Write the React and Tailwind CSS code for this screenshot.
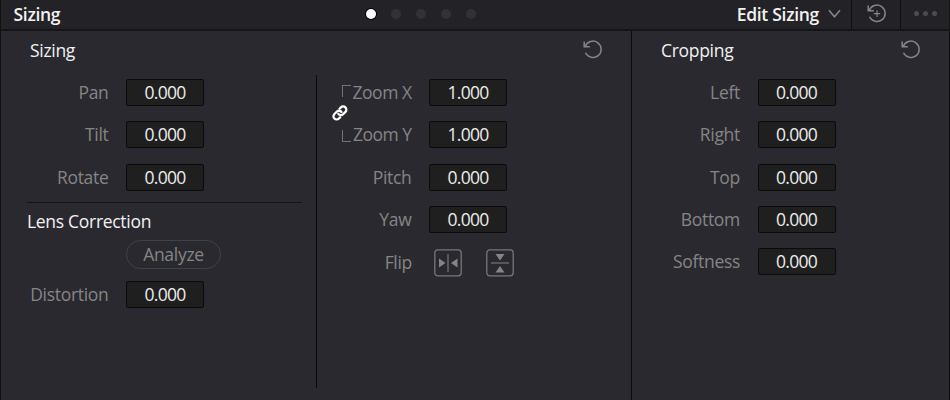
import React from "react";

function ResetIcon({ plus = false }) {
  return (
    <svg width="20" height="20" viewBox="0 0 20 20" fill="none" stroke="#858585" strokeWidth="1.5" className="block">
      <path d="M2.2 6.6 A8.2 8.2 0 1 1 2.5 12.8" />
      <path d="M1.2 1.4 V6.8 H6.8" />
      {plus && <path d="M6.8 9.7 H13.2 M10 6.5 V12.9" strokeWidth="1.2" />}
    </svg>
  );
}

function Value({ children }) {
  return (
    <div className="flex h-[27px] w-[78px] items-center justify-center rounded-[2px] border border-[#0a0a0b] bg-[#1f1f1f] pb-px text-[17.5px] leading-[18px] tracking-[-0.7px] text-[#ececec]">
      {children}
    </div>
  );
}

function Row({ label, value, tight = false }) {
  return (
    <div className="flex h-[27px] items-center">
      <div className={`mr-[17.5px] flex-1 whitespace-nowrap pb-px text-right leading-[18px] text-[#858585] ${tight ? "tracking-[-0.5px]" : ""}`}>{label}</div>
      <Value>{value}</Value>
    </div>
  );
}

function LinkIcon() {
  return (
    <svg width="16" height="18" viewBox="0 0 16 18" fill="none" stroke="#fff" strokeWidth="2.3" strokeLinecap="round" className="block">
      <path d="M6.3 9.9 a3.2 3.2 0 0 0 4.8 .3 l2.3-2.3 a3.15 3.15 0 0 0 -4.5 -4.5 l-1.3 1.3" />
      <path d="M9.5 8 a3.2 3.2 0 0 0 -4.8 -.3 l-2.3 2.3 a3.15 3.15 0 0 0 4.5 4.5 l1.3-1.3" />
    </svg>
  );
}

function FlipIcon({ vertical = false }) {
  return (
    <svg width="28" height="28" viewBox="0 0 28 28" fill="none" stroke="#77777a" className="block">
      <rect x="0.8" y="0.8" width="26.4" height="26" rx="3" strokeWidth="1.3" />
      <g transform={vertical ? "rotate(90 14 14)" : undefined}>
        <path d="M14 5 V23" strokeWidth="1.2" />
        <path d="M5 9.5 V18.5 L11.5 14 Z M23.5 9.5 V18.5 L17 14 Z" fill="#858585" stroke="none" />
      </g>
    </svg>
  );
}

export default function App() {
  return (
    <div className="flex h-[400px] w-[950px] flex-col border-x border-[#111114] bg-[#2a292f] font-['Open_Sans','Noto_Sans',sans-serif] text-[17.5px] leading-[18px] tracking-[-0.3px] text-[#f2f2f2]">
      <header className="flex h-[31px] shrink-0 border-b-2 border-[#151418] bg-[#232227]">
        <div className="flex w-[364.5px] items-center pb-px pl-[12.5px] font-semibold">Sizing</div>
        <div className="flex flex-1 items-center gap-[15px] pb-px">
          <span className="h-[10px] w-[10px] rounded-full bg-white ring-1 ring-black" />
          <span className="h-[10px] w-[10px] rounded-full bg-[#323136]" />
          <span className="h-[10px] w-[10px] rounded-full bg-[#323136]" />
          <span className="h-[10px] w-[10px] rounded-full bg-[#323136]" />
          <span className="h-[10px] w-[10px] rounded-full bg-[#323136]" />
        </div>
        <div className="flex items-center pr-[10px] pb-px font-semibold">
          Edit Sizing
          <svg width="13" height="10" viewBox="0 0 13 10" fill="none" stroke="#858585" strokeWidth="1.6" className="ml-[9px]">
            <path d="M1 1.2 L6.5 7.8 L12 1.2" />
          </svg>
        </div>
        <div className="flex w-[49px] items-center justify-center border-l border-[#0e0e11] pb-px pl-px">
          <ResetIcon plus />
        </div>
        <div className="flex w-[49px] items-center justify-center gap-1 border-l border-[#0e0e11] pb-[2px]">
          <span className="h-[5px] w-[5px] rounded-full bg-[#4d4c50]" />
          <span className="h-[5px] w-[5px] rounded-full bg-[#4d4c50]" />
          <span className="h-[5px] w-[5px] rounded-full bg-[#4d4c50]" />
        </div>
      </header>
      <main className="flex flex-1">
        <section className="w-[630px]">
          <div className="flex h-[44px] items-center justify-between pr-[28px] pb-[6px] pl-[29px]">
            <h2>Sizing</h2>
            <ResetIcon />
          </div>
          <div className="flex">
            <div className="w-[315px] pl-[26px]">
              <div className="mt-1 flex w-[177px] flex-col gap-[15.25px]">
                <Row label="Pan" value="0.000" />
                <Row label="Tilt" value="0.000" />
                <Row label="Rotate" value="0.000" />
              </div>
              <div className="mt-[11.5px] h-px w-[275px] bg-[#151518]" />
              <h2 className="mt-[9px] h-[17px]">Lens Correction</h2>
              <button className="mt-[11px] ml-[99px] flex h-[29px] w-[95px] items-center justify-center rounded-full border border-[#3e4347] pb-px tracking-[-0.3px] text-[#858585]">Analyze</button>
              <div className="mt-[12px] w-[177px]">
                <Row label="Distortion" value="0.000" />
              </div>
            </div>
            <div className="flex h-[313px] border-l border-[#09090b] pt-1">
              <div className="flex w-[34px] flex-col items-end">
                <span className="mt-[6px] h-[12px] w-[9px] border-t border-l border-[#737373]" />
                <span className="mt-[7px] mr-px h-[18px] w-[18px]"><LinkIcon /></span>
                <span className="mt-[8px] h-[12px] w-[9px] border-b border-l border-[#737373]" />
              </div>
              <div className="flex w-[156px] flex-col gap-[15.25px]">
                <Row label="Zoom X" value="1.000" tight />
                <Row label="Zoom Y" value="1.000" tight />
                <Row label="Pitch" value="0.000" />
                <Row label="Yaw" value="0.000" />
                <div className="flex h-[28px] items-center pt-px">
                  <div className="mr-[22px] w-[61px] shrink-0 pb-px text-right text-[#858585]">Flip</div>
                  <div className="flex gap-[24px]">
                    <FlipIcon />
                    <FlipIcon vertical />
                  </div>
                </div>
              </div>
            </div>
          </div>
        </section>
        <section className="flex-1 border-l border-[#0b0b0d]">
          <div className="flex h-[44px] items-center justify-between pr-[28px] pb-[6px] pl-[29px]">
            <h2>Cropping</h2>
            <ResetIcon />
          </div>
          <div className="mt-1 flex w-[203.5px] flex-col gap-[15.25px]">
            <Row label="Left" value="0.000" />
            <Row label="Right" value="0.000" />
            <Row label="Top" value="0.000" />
            <Row label="Bottom" value="0.000" />
            <Row label="Softness" value="0.000" />
          </div>
        </section>
      </main>
    </div>
  );
}
